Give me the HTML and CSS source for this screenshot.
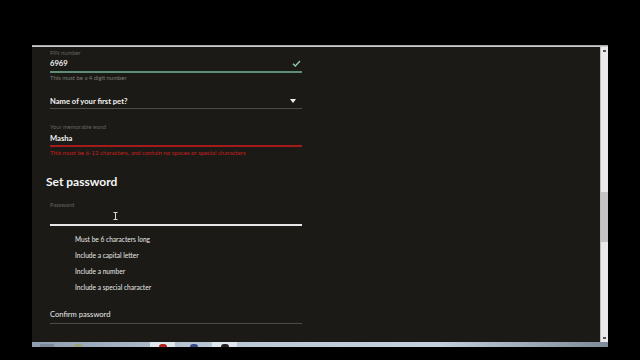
FILE: index.html
```html
<!DOCTYPE html>
<html>
<head>
<meta charset="utf-8">
<link rel="stylesheet" href="styles.css">
</head>
<body>
<div class="screen">
  <div class="topline"></div>
  <div class="window">
    <main class="content">
      <div class="form">
        <div class="field">
          <div class="label">PIN number</div>
          <div class="row">
            <span class="value">6969</span>
            <svg class="check" width="9" height="7" viewBox="0 0 9 7"><path d="M1 3.8 L3.3 6 L8 1" fill="none" stroke="#8fd0a8" stroke-width="1.3"/></svg>
          </div>
          <div class="line ok"></div>
          <div class="hint">This must be a 4 digit number</div>
        </div>

        <div class="select">
          <div class="row">
            <span class="value">Name of your first pet?</span>
            <span class="caret"></span>
          </div>
          <div class="line thin"></div>
        </div>

        <div class="field memorable">
          <div class="label">Your memorable word</div>
          <div class="row"><span class="value">Masha</span></div>
          <div class="line bad"></div>
          <div class="hint err">This must be 6-12 characters, and contain no spaces or special characters</div>
        </div>

        <h2 class="heading">Set password</h2>

        <div class="field pw">
          <div class="label">Password</div>
          <div class="input-space">
            <svg class="ibeam" width="5" height="8" viewBox="0 0 5 8"><path d="M0.5 0.5 H4.5 M2.5 0.5 V7.5 M0.5 7.5 H4.5" stroke="#d8d8d8" stroke-width="1" fill="none"/></svg>
          </div>
          <div class="line white"></div>
        </div>

        <ul class="rules">
          <li>Must be 6 characters long</li>
          <li>Include a capital letter</li>
          <li>Include a number</li>
          <li>Include a special character</li>
        </ul>

        <div class="confirm">
          <div class="confirm-text">Confirm password</div>
          <div class="line thin"></div>
        </div>
      </div>
    </main>
    <div class="scrollbar">
      <div class="arrow up"></div>
      <div class="track">
        <div class="thumb"></div>
      </div>
      <div class="arrow down"></div>
    </div>
  </div>
  <div class="taskbar">
    <span class="tb-item dim"></span>
    <span class="tb-item yel"></span>
    <span class="tb-gap"></span>
    <span class="tb-btn"><i class="dot red"></i></span>
    <span class="tb-btn blue"><i class="dot navy"></i></span>
    <span class="tb-btn"><i class="dot dark"></i></span>
  </div>
</div>
</body>
</html>
```

FILE: styles.css
```css
* { box-sizing: border-box; margin: 0; padding: 0; }
html, body { background: #000; }
body {
  width: 640px;
  height: 360px;
  overflow: hidden;
  font-family: Lato, "Noto Sans", "Liberation Sans", sans-serif;
}
.screen {
  margin: 45px 0 0 32px;
  width: 576px;
  display: flex;
  flex-direction: column;
}
.topline {
  height: 2px;
  background: linear-gradient(#9a9a9a, #d8d8d8);
}
.window {
  display: flex;
  height: 295px;
}
.content {
  flex: 1;
  background: #1b1a16;
  padding: 2px 0 0 18px;
}
.form {
  width: 252px;
  display: flex;
  flex-direction: column;
  color: #f2f2f2;
}
.label {
  font-size: 5.8px;
  line-height: 8px;
  color: #66655f;
}
.row {
  display: flex;
  justify-content: space-between;
  align-items: center;
  height: 12px;
}
.value {
  font-size: 7.6px;
  font-weight: 700;
  line-height: 12px;
  color: #f4f4f4;
}
.check { margin-right: 1px; }
.line { height: 1px; background: #4a4945; }
.line.ok { height: 2px; margin-top: 2px; background: #5f8e77; }
.line.bad { height: 2px; margin-top: 1px; background: #a51b1b; }
.line.white { height: 2px; background: #e8e8e8; }
.line.thin { background: #4c4b47; }
.hint {
  font-size: 5.9px;
  line-height: 8px;
  margin-top: 1px;
  color: #7e7d78;
}
.hint.err { color: #c4201c; margin-top: 2px; font-size: 6.1px; }
.select { margin-top: 12px; }
.select .row { height: 14px; }
.select .value { line-height: 12px; }
.caret {
  width: 0; height: 0;
  border-left: 3.5px solid transparent;
  border-right: 3.5px solid transparent;
  border-top: 4px solid #f0f0f0;
  margin-right: 6px;
}
.memorable { margin-top: 14px; }
.memorable .row { margin-top: 1px; }
.heading {
  margin: 17px 0 0 -4px;
  font-size: 12px;
  font-weight: 700;
  line-height: 16px;
  color: #f6f6f6;
}
.pw { margin-top: 11px; }
.input-space {
  height: 15px;
  position: relative;
}
.ibeam { position: absolute; left: 63px; top: 3px; }
.rules {
  list-style: none;
  margin-top: 8px;
  padding-left: 25px;
  display: flex;
  flex-direction: column;
  gap: 6px;
}
.rules li {
  font-size: 6.6px;
  line-height: 10px;
  color: #e8e8e8;
}
.confirm { margin-top: 16px; }
.confirm-text {
  font-size: 7.6px;
  line-height: 12px;
  color: #e8e8e8;
}
.confirm .line { margin-top: 3px; }

.scrollbar {
  width: 8px;
  background: #e9e9e9;
  border-left: 1px solid #bdbdbd;
  display: flex;
  flex-direction: column;
}
.arrow { height: 8px; position: relative; }
.arrow::after {
  content: "";
  position: absolute;
  left: 2px; top: 3px;
  width: 3px; height: 2px;
  background: #555;
}
.track { flex: 1; padding-top: 137px; }
.thumb { height: 50px; background: #c4c4c4; }

.taskbar {
  height: 5px;
  background: linear-gradient(90deg, #8e9db0 0%, #b9c6d4 30%, #c4d0dc 70%, #7f8a99 100%);
  display: flex;
  align-items: flex-end;
}
.tb-item { width: 14px; height: 3px; margin-left: 8px; }
.tb-item.dim { background: #7c8a9c; }
.tb-item.yel { background: #9ea27a; margin-left: 20px; width: 8px; }
.tb-gap { width: 68px; }
.tb-btn {
  width: 25px; height: 5px;
  background: #dfe6ee;
  margin-right: 6px;
  display: flex;
  justify-content: center;
  align-items: flex-end;
}
.tb-btn.blue { background: #b7c4d4; }
.dot { display: block; width: 8px; height: 3px; border-radius: 4px 4px 0 0; }
.dot.red { background: #b2201c; }
.dot.navy { background: #3c4a8a; }
.dot.dark { background: #222; }
```
